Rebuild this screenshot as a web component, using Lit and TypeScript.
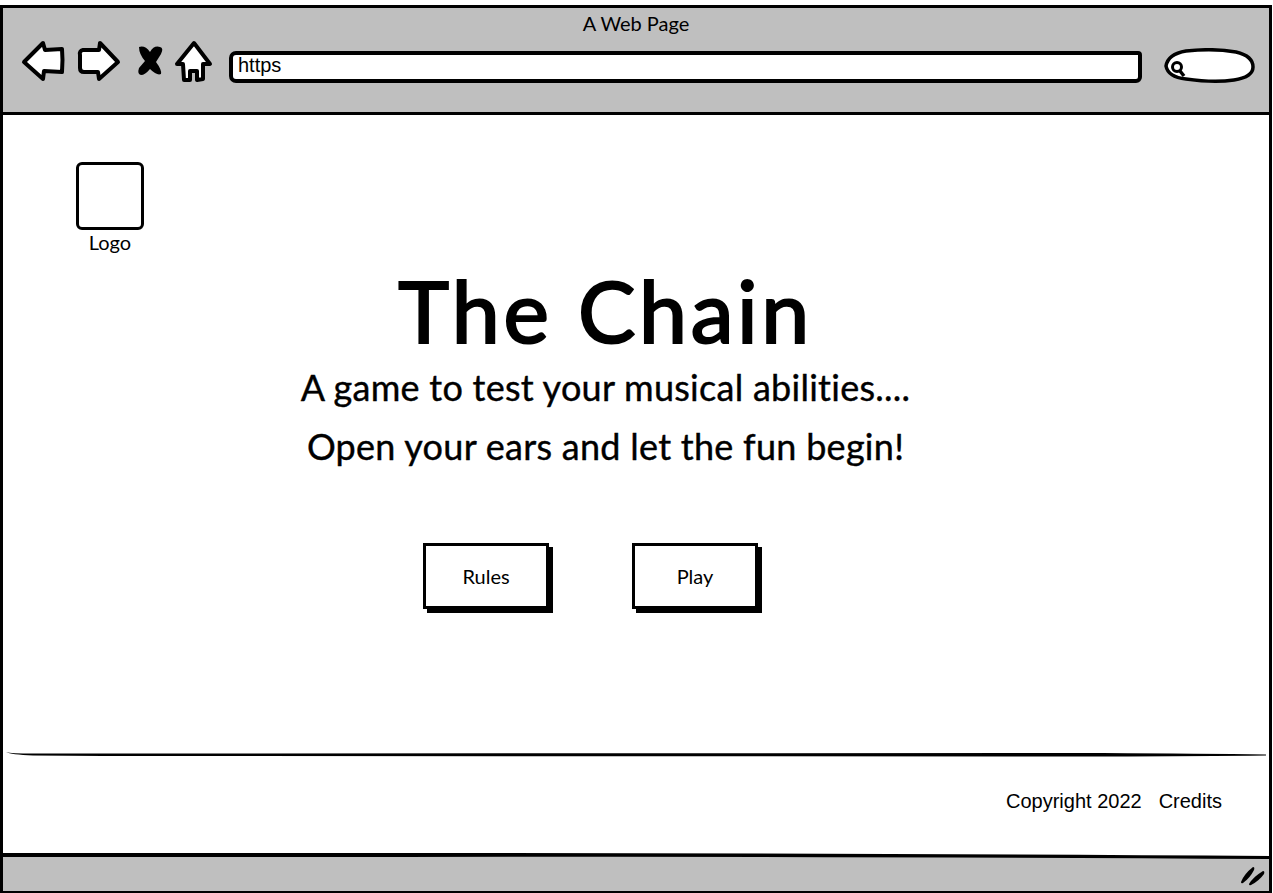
import { LitElement, html, css } from "lit";
import { customElement } from "lit/decorators.js";

@customElement("app-root")
export class AppRoot extends LitElement {
  static styles = css`
    :host { display: block; width: 1273px; height: 893px; background: #fff; overflow: hidden;
      font-family: "Lato", "Liberation Sans", sans-serif; color: #000; }
    .window { box-sizing: border-box; margin: 5px 1px 0 0; height: 888px; border: solid #000; border-width: 3px 3px 2px 3px;
      display: flex; flex-direction: column; background: #fff; }
    .chrome { height: 104px; flex: none; background: #bfbfbf; border-bottom: 3px solid #000; display: flex; flex-direction: column; }
    .page-title { height: 26px; padding-top: 2px; text-align: center; font-size: 20px; line-height: 26px; box-sizing: content-box; }
    .toolbar { display: flex; align-items: flex-start; padding-left: 18px; margin-top: 2px; }
    .nav { display: block; flex: none; }
    .url { flex: none; margin: 13px 0 0 13px; box-sizing: border-box; width: 913px; height: 32px; background: #fff; border: 4px solid #000;
      border-radius: 7px 4px 6px 7px; font: 20px/20px "Liberation Sans", sans-serif; padding-left: 5px; }
    .search { display: block; flex: none; margin: 10px 0 0 22px; }
    main { flex: 1; display: flex; flex-direction: column; min-height: 0; }
    .logo { width: 68px; margin: 47px 0 0 73px; display: flex; flex-direction: column; align-items: center; }
    .logo-box { box-sizing: border-box; width: 68px; height: 68px; border: 3px solid #000; border-radius: 6px; }
    .logo-label { font-size: 20px; line-height: 24px; white-space: nowrap; }
    .hero { width: 1205px; text-align: center; }
    h1 { margin: 7px 0 0; font-size: 86px; line-height: 97px; font-weight: 400; letter-spacing: 3.6px; -webkit-text-stroke: 2.2px #000; }
    .sub { margin: 0; font-size: 36px; line-height: 59px; font-weight: 400; letter-spacing: 0.27px; -webkit-text-stroke: 0.4px #000; }
    .buttons { display: flex; gap: 83px; justify-content: center; margin-top: 67px; padding-right: 30px; }
    .btn { box-sizing: border-box; width: 126px; height: 66px; background: #fff; border: 3px solid #000; box-shadow: 4px 4px 0 #000;
      font: inherit; font-size: 20px; color: #000; padding: 0; display: flex; align-items: center; justify-content: center; }
    .divider { display: block; margin-top: auto; flex: none; }
    .foot { height: 96px; flex: none; display: flex; gap: 17px; justify-content: flex-end; align-items: center; padding: 0 47px 8px 0;
      box-sizing: border-box; font: 20px "Liberation Sans", sans-serif; }
    .edge { display: block; flex: none; }
    .status { height: 32px; flex: none; background: #bfbfbf; display: flex; justify-content: flex-end; align-items: center; padding-right: 3px; }
  `;

  render() {
    return html`
      <div class="window">
        <header class="chrome">
          <div class="page-title">A Web Page</div>
          <div class="toolbar">
            <svg class="nav" width="195" height="52" viewBox="0 0 195 52" fill="#fff" stroke="#000" stroke-width="4" stroke-linejoin="round">
              <path d="M3 24 L22 5 L24 12 L41 11 Q42 22 41 34 L23 33 L22 41 Z"/>
              <path d="M97 24 L79 5 L78 12 L62 12 Q58 13 59 17 L59 30 Q59 34 63 34 L77 34 L78 41 Z"/>
              <g fill="#000" stroke="none">
                <path d="M118 9 Q124 7 129 14 Q133 7 139 9 Q143 10 140 16 L135 24 Q141 32 140 36 Q136 38 129 31 Q124 37 120 37 Q116 36 118 30 L124 23 Q118 16 118 9 Z"/>
              </g>
              <path d="M173 5 L189 26 L182 26 L182 41 L176 42 L176 33 L169 33 L169 42 L163 42 L162 26 L156 26 Z"/>
            </svg>
            <div class="url">https</div>
            <svg class="search" width="92" height="37" viewBox="0 0 92 37">
              <path d="M2 18 Q4 6 22 3 Q50 0 72 4 Q89 8 89 19 Q89 29 70 32 Q50 35 22 31 Q4 29 2 18 Z" fill="#fff" stroke="#000" stroke-width="3.5"/>
              <circle cx="13" cy="19" r="4.5" fill="none" stroke="#000" stroke-width="3"/>
              <path d="M16 23 L20 28" stroke="#000" stroke-width="3.5"/>
            </svg>
          </div>
        </header>
        <main>
          <div class="logo">
            <div class="logo-box"></div>
            <div class="logo-label">Logo</div>
          </div>
          <section class="hero">
            <h1>The Chain</h1>
            <p class="sub">A game to test your musical abilities....</p>
            <p class="sub">Open your ears and let the fun begin!</p>
            <div class="buttons">
              <button class="btn">Rules</button>
              <button class="btn">Play</button>
            </div>
          </section>
          <svg class="divider" width="1267" height="5" viewBox="0 0 1267 5">
            <path d="M3 0 Q8 1.5 30 1.5 L1100 1 Q1200 1.5 1263 2.5 L1263 3.5 Q1200 4 1100 4.5 L100 4 L30 3.5 Q8 2.5 3 0 Z" fill="#000"/>
          </svg>
          <div class="foot"><span>Copyright 2022</span><span>Credits</span></div>
        </main>
        <svg class="edge" width="1267" height="6" viewBox="0 0 1267 6">
          <path d="M0 1 L420 1.5 Q800 1 1267 4.5 L1267 6 L0 6 Z" fill="#bfbfbf"/>
          <path d="M0 0 L400 0 Q800 0 1267 3 L1267 6 Q800 3 400 4 L0 4 Z" fill="#000"/>
        </svg>
        <footer class="status">
          <svg width="26" height="22" viewBox="0 0 26 22" fill="#000">
            <path d="M1 18 Q4 10 13 3 Q15 3 14 6 Q10 14 3 19 Q1 20 1 18 Z"/>
            <path d="M9 20 Q13 13 23 7 Q25 7 24 10 Q19 17 11 21 Q9 22 9 20 Z"/>
          </svg>
        </footer>
      </div>
    `;
  }
}
